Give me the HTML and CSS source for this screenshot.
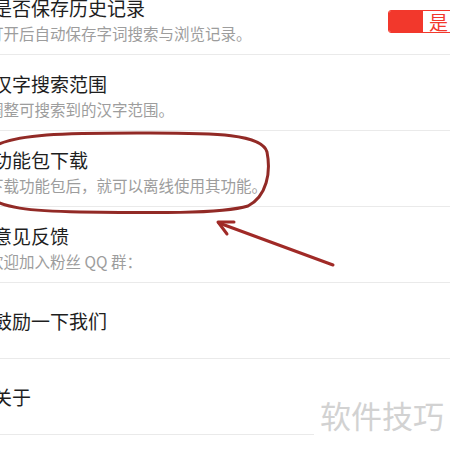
FILE: index.html
```html
<!DOCTYPE html>
<html lang="zh-CN">
<head>
    <meta charset="UTF-8">
    <meta name="viewport" content="width=device-width, initial-scale=1.0">
    <title>设置</title>
    <link rel="stylesheet" href="styles.css">
</head>
<body>

    <ul class="settings">
        <li class="row">
            <div class="row-text two-line">
                <div class="title">是否保存历史记录</div>
                <div class="sub">打开后自动保存字词搜索与浏览记录。</div>
            </div>
            <div class="toggle">
                <span class="toggle-on"></span>
                <span class="toggle-label">是</span>
            </div>
        </li>
        <li class="row">
            <div class="row-text two-line">
                <div class="title">汉字搜索范围</div>
                <div class="sub">调整可搜索到的汉字范围。</div>
            </div>
            <span class="chevron">›</span>
        </li>
        <li class="row">
            <div class="row-text two-line">
                <div class="title">功能包下载</div>
                <div class="sub">下载功能包后，就可以离线使用其功能。</div>
            </div>
            <span class="chevron">›</span>
        </li>
        <li class="row">
            <div class="row-text two-line">
                <div class="title">意见反馈</div>
                <div class="sub">欢迎加入粉丝 QQ 群：</div>
            </div>
            <span class="chevron">›</span>
        </li>
        <li class="row">
            <div class="row-text">
                <div class="title">鼓励一下我们</div>
            </div>
            <span class="chevron">›</span>
        </li>
        <li class="row">
            <div class="row-text">
                <div class="title">关于</div>
            </div>
        </li>
    </ul>

    <!-- hand-drawn annotation on top of the screenshot -->
    <svg class="annotation" viewBox="0 0 450 450" xmlns="http://www.w3.org/2000/svg">
        <path d="M -12 150 C 10 132, 80 133, 150 133 C 215 133, 262 134, 267 152 C 271 172, 267 196, 248 206 C 222 214, 150 213, 80 212 C 30 211, 0 208, -12 196"
              fill="none" stroke="#922a26" stroke-width="3" stroke-linecap="round"/>
        <path d="M 333 265 L 219 223" fill="none" stroke="#a02a27" stroke-width="3" stroke-linecap="round"/>
        <path d="M 234 222 L 218 222 L 227 234" fill="none" stroke="#a02a27" stroke-width="3" stroke-linecap="round" stroke-linejoin="round"/>
    </svg>

    <div class="watermark">软件技巧</div>

</body>
</html>
```

FILE: styles.css
```css
/* --- Base --- */
:root {
    --text-main: #1e1e1e;
    --text-sub: #9d9d9d;
    --divider: #eaeaea;
    --accent: #f2382c;
}

body, html {
    margin: 0;
    padding: 0;
    height: 100%;
    background: #ffffff;
    font-family: "Noto Sans CJK SC", "Noto Sans", sans-serif;
    overflow: hidden;
}

/* --- Settings list --- */
.settings {
    list-style: none;
    margin: -21px 0 0 -7px; /* page is a cropped phone capture */
    padding: 0;
}

.row {
    display: flex;
    align-items: center;
    height: 76px;
    box-sizing: border-box;
    border-bottom: 1px solid var(--divider);
}

.row-text {
    flex: 1;
    display: flex;
    flex-direction: column;
    justify-content: center;
}

.two-line {
    padding-top: 5px;
}

.title {
    font-size: 19px;
    line-height: 26px;
    color: var(--text-main);
}

.sub {
    margin-top: 2px;
    margin-left: -5px;
    font-size: 15.5px;
    line-height: 21px;
    color: var(--text-sub);
}

.chevron {
    color: #ececec;
    font-size: 22px;
    margin-right: -8px;
}

/* --- Toggle --- */
.toggle {
    display: flex;
    height: 21px;
    margin-top: 10px;
    margin-right: -10px;
    border: 1px solid var(--accent);
    border-radius: 3px;
    overflow: hidden;
}

.toggle-on {
    width: 34px;
    background: var(--accent);
}

.toggle-label {
    width: 30px;
    padding-left: 6px;
    font-size: 19px;
    line-height: 21px;
    color: var(--accent);
    background: #fff;
}

/* --- Overlays --- */
.annotation {
    position: absolute;
    top: 0;
    left: 0;
    width: 450px;
    height: 450px;
    pointer-events: none;
}

.watermark {
    position: absolute;
    left: 314px;
    top: 392px;
    width: 136px;
    height: 58px;
    padding-left: 6px;
    box-sizing: border-box;
    background: #fff;
    color: #d2d2d2;
    font-size: 31px;
    line-height: 46px;
}
```
